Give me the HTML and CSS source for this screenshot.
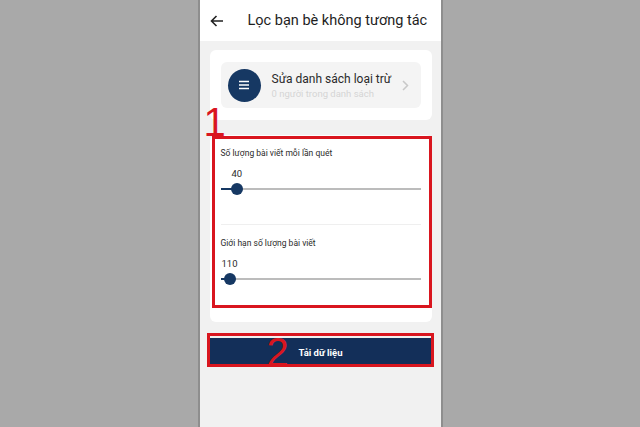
FILE: index.html
```html
<!DOCTYPE html>
<html lang="vi">
<head>
    <meta charset="UTF-8">
    <meta name="viewport" content="width=device-width, initial-scale=1.0">
    <title>Lọc bạn bè không tương tác</title>
    <link rel="stylesheet" href="styles.css">
</head>
<body>
    <div class="phone">
        <div class="top-bar">
            <svg class="back" width="14" height="12" viewBox="0 0 14 12">
                <path d="M13 6H1.5M6.5 1L1.5 6l5 5" fill="none" stroke="#222" stroke-width="1.6"/>
            </svg>
            <span class="title">Lọc bạn bè không tương tác</span>
        </div>

        <div class="content">
            <div class="card">
                <div class="exclude-row">
                    <div class="menu-icon">
                        <svg width="12" height="10" viewBox="0 0 12 10">
                            <path d="M1 1.5h10M1 5h10M1 8.5h10" stroke="#fff" stroke-width="1.5"/>
                        </svg>
                    </div>
                    <div class="exclude-text">
                        <div class="exclude-title">Sửa danh sách loại trừ</div>
                        <div class="exclude-sub">0 người trong danh sách</div>
                    </div>
                    <svg class="chevron" width="7" height="11" viewBox="0 0 7 11">
                        <path d="M1 1l4.5 4.5L1 10" fill="none" stroke="#c8c8c8" stroke-width="1.5"/>
                    </svg>
                </div>
            </div>

            <div class="card settings">
                <div class="setting">
                    <div class="setting-label">Số lượng bài viết mỗi lần quét</div>
                    <div class="setting-value value-40">40</div>
                    <div class="slider">
                        <div class="slider-fill" style="width: 16px"></div>
                        <div class="slider-thumb" style="left: 10px"></div>
                    </div>
                </div>
                <div class="setting">
                    <div class="setting-label">Giới hạn số lượng bài viết</div>
                    <div class="setting-value">110</div>
                    <div class="slider">
                        <div class="slider-fill" style="width: 9px"></div>
                        <div class="slider-thumb" style="left: 3px"></div>
                    </div>
                </div>
            </div>

            <button class="load-btn">Tải dữ liệu</button>
        </div>

        <!-- annotations drawn over the screenshot -->
        <div class="mark-box box-1"></div>
        <div class="mark-box box-2"></div>
        <span class="mark-num num-1">1</span>
        <span class="mark-num num-2">2</span>
    </div>
</body>
</html>
```

FILE: styles.css
```css
body {
    margin: 0;
    height: 427px;
    overflow: hidden;
    background: #a9a9a9;
    display: flex;
    justify-content: center;
    font-family: Roboto, "Noto Sans", sans-serif;
}

.phone {
    position: relative;
    width: 241px;
    height: 427px;
    background: #f1f1f1;
    border-left: 2px solid #8e8e8e;
    border-right: 2px solid #8e8e8e;
}

.top-bar {
    height: 41px;
    background: #fff;
    display: flex;
    align-items: center;
    padding-left: 10px;
    gap: 24px;
}

.back {
    display: block;
}

.title {
    font-size: 14.5px;
    color: #1e1e1e;
}

.content {
    padding: 9px 9px 0 10px;
}

.card {
    background: #fff;
    border-radius: 6px;
    padding: 12px 11px;
}

.exclude-row {
    display: flex;
    align-items: center;
    height: 46px;
    padding: 0 12px 0 7px;
    background: #f4f4f4;
    border-radius: 6px;
}

.menu-icon {
    width: 33px;
    height: 33px;
    border-radius: 50%;
    background: #163863;
    display: flex;
    align-items: center;
    justify-content: center;
    flex-shrink: 0;
}

.exclude-text {
    flex: 1;
    margin-left: 11px;
}

.exclude-title {
    font-size: 12px;
    color: #2a2a2a;
}

.exclude-sub {
    font-size: 9.5px;
    color: #d4d4d4;
    margin-top: 2px;
}

.settings {
    margin-top: 15px;
    padding: 0 11px;
}

.setting {
    padding: 13px 0 34px;
}

.setting + .setting {
    border-top: 1px solid #efefef;
    padding-top: 13px;
    padding-bottom: 42px;
}

.setting-label {
    font-size: 8.5px;
    color: #2b2b2b;
}

.setting-value {
    font-size: 9.5px;
    color: #2b2b2b;
    margin-top: 10px;
    padding-left: 1px;
}

.value-40 {
    padding-left: 11px;
}

.slider {
    position: relative;
    height: 2px;
    margin-top: 9px;
    background: #bcbcbc;
}

.slider-fill {
    height: 2px;
    background: #163863;
}

.slider-thumb {
    position: absolute;
    top: -5px;
    width: 12px;
    height: 12px;
    border-radius: 50%;
    background: #163863;
}

.load-btn {
    display: block;
    width: 100%;
    height: 28px;
    margin-top: 16px;
    border: none;
    background: #132f59;
    color: #fff;
    font-family: Roboto, "Noto Sans", sans-serif;
    font-size: 9.5px;
    font-weight: bold;
}

.mark-box {
    position: absolute;
    border: 3px solid #d9161f;
}

.box-1 {
    left: 12px;
    top: 136px;
    width: 214px;
    height: 166px;
}

.box-2 {
    left: 7px;
    top: 333px;
    width: 221px;
    height: 28px;
}

.mark-num {
    position: absolute;
    color: #d9161f;
    font-family: "Liberation Sans", Arial, sans-serif;
    font-size: 40px;
    line-height: 1;
}

.num-1 {
    left: 4px;
    top: 102px;
}

.num-2 {
    left: 67px;
    top: 332px;
}
```
